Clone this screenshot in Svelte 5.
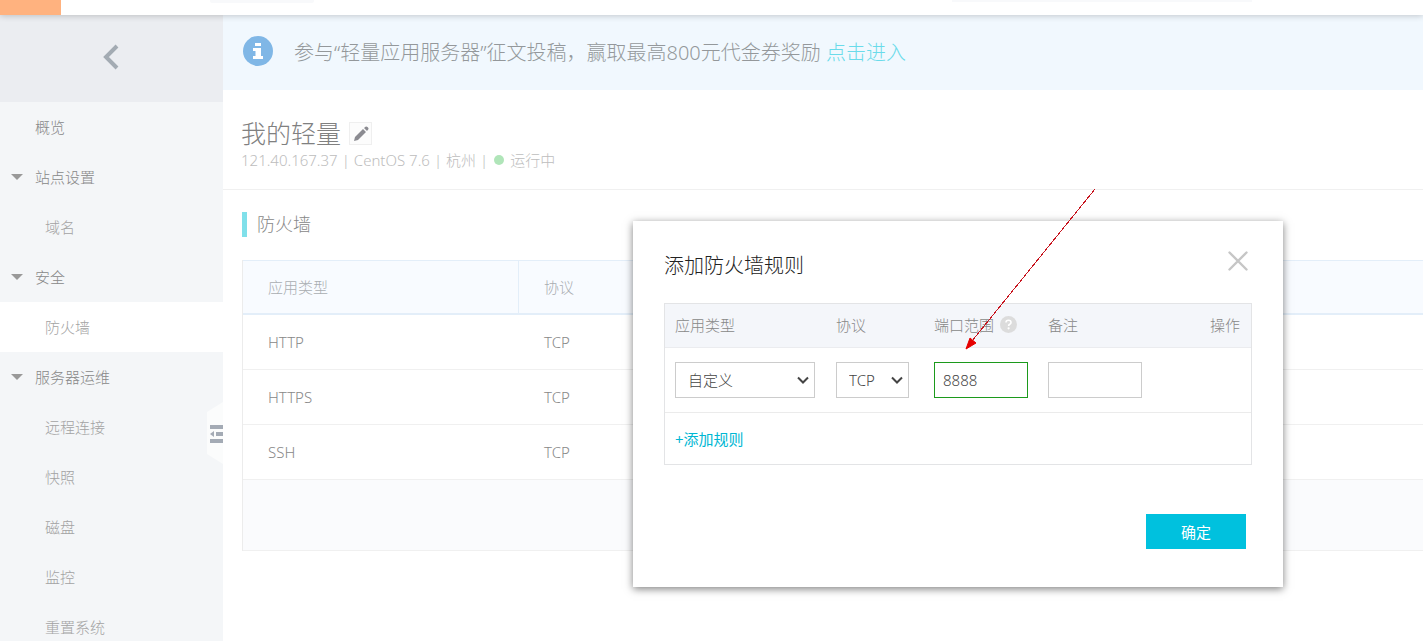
<script>
  const menu = [
    { label: '概览', type: 'top' },
    { label: '站点设置', type: 'group' },
    { label: '域名', type: 'sub' },
    { label: '安全', type: 'group' },
    { label: '防火墙', type: 'sub', active: true },
    { label: '服务器运维', type: 'group' },
    { label: '远程连接', type: 'sub' },
    { label: '快照', type: 'sub' },
    { label: '磁盘', type: 'sub' },
    { label: '监控', type: 'sub' },
    { label: '重置系统', type: 'sub' },
  ];

  const rules = [
    { app: 'HTTP', protocol: 'TCP' },
    { app: 'HTTPS', protocol: 'TCP' },
    { app: 'SSH', protocol: 'TCP' },
  ];

  let app = $state('自定义');
  let protocol = $state('TCP');
  let port = $state('8888');
  let remark = $state('');
  let open = $state(true);
</script>

<div class="page">
  <header class="topbar">
    <div class="brand"></div>
    <div class="region"></div>
    <div class="links"></div>
  </header>

  <div class="body">
    <aside class="sidebar">
      <button class="back" aria-label="返回">
        <svg width="18" height="26" viewBox="0 0 18 26">
          <path d="M15 2 L4 13 L15 24" fill="none" stroke="#a3abb3" stroke-width="4" />
        </svg>
      </button>
      <nav>
        {#each menu as item}
          <a href="#menu" class="item {item.type}" class:active={item.active}>
            {#if item.type === 'group'}<span class="caret"></span>{/if}
            {item.label}
          </a>
        {/each}
      </nav>
      <button class="fold" aria-label="收起">
        <svg width="16" height="62" viewBox="0 0 16 62">
          <path d="M16 0 L0 10 V52 L16 62 Z" fill="#fbfcfc" />
          <path d="M3 23 H16 V27 H3 Z M9 30 H16 V34 H9 Z M3 37 H16 V41 H3 Z" fill="#a4abb5" />
          <path d="M7 29 V35 L3 32 Z" fill="#a4abb5" />
        </svg>
      </button>
    </aside>

    <main>
      <div class="banner">
        <svg width="30" height="30" viewBox="0 0 30 30">
          <circle cx="15" cy="15" r="15" fill="#80b7e6" />
          <path d="M12 7 H18 V10 H12 Z M10 12 H18 V20 H20 V23 H10 V20 H12.500 V15 H10 Z" fill="#fff" />
        </svg>
        <p>参与“轻量应用服务器”征文投稿，赢取最高800元代金券奖励 <a href="#activity">点击进入</a></p>
      </div>

      <section class="server">
        <div class="name">
          <h1>我的轻量</h1>
          <button class="edit" aria-label="编辑">
            <svg width="16" height="16" viewBox="0 0 16 16">
              <path d="M1 15 L2 11 L10 3 L13 6 L5 14 Z M11 2 L12.500 0.700 Q13.500 0 14.500 1 L15.200 1.700 Q16 2.600 15.200 3.500 L14 5 Z" fill="#8b8b91" />
            </svg>
          </button>
        </div>
        <div class="meta">
          <span>121.40.167.37</span><i>|</i><span>CentOS 7.6</span><i>|</i><span>杭州</span><i>|</i>
          <span class="dot"></span><span>运行中</span>
        </div>
      </section>

      <section class="firewall">
        <h2>防火墙</h2>
        <table class="rules">
          <thead>
            <tr><th class="app">应用类型</th><th>协议</th></tr>
          </thead>
          <tbody>
            {#each rules as rule}
              <tr><td>{rule.app}</td><td>{rule.protocol}</td></tr>
            {/each}
          </tbody>
          <tfoot>
            <tr><td colspan="2"></td></tr>
          </tfoot>
        </table>
      </section>
    </main>
  </div>

  {#if open}
    <div class="modal" role="dialog" aria-labelledby="modal-title">
      <div class="modal-head">
        <h3 id="modal-title">添加防火墙规则</h3>
        <button class="close" aria-label="关闭" onclick={() => (open = false)}>
          <svg width="20" height="20" viewBox="0 0 20 20">
            <path d="M1.500 1.500 L18.500 18.500 M18.500 1.500 L1.500 18.500" stroke="#c6c6c6" stroke-width="2.400" stroke-linecap="round" />
          </svg>
        </button>
      </div>

      <table class="form">
        <thead>
          <tr>
            <th class="c-app">应用类型</th>
            <th class="c-protocol">协议</th>
            <th class="c-port">
              <span class="port-label">
                端口范围
                <svg width="17" height="17" viewBox="0 0 17 17">
                  <circle cx="8.500" cy="8.500" r="8.500" fill="#dcdcdc" />
                  <path d="M6 6.500 Q6 4.300 8.500 4.300 Q11 4.300 11 6.400 Q11 7.600 9.700 8.300 Q8.600 8.900 8.600 10" fill="none" stroke="#fff" stroke-width="1.600" />
                  <circle cx="8.600" cy="12.300" r="1.100" fill="#fff" />
                </svg>
              </span>
            </th>
            <th class="c-remark">备注</th>
            <th class="c-action">操作</th>
          </tr>
        </thead>
        <tbody>
          <tr class="fields">
            <td>
              <select class="app-select" aria-label="应用类型" bind:value={app}>
                <option>自定义</option>
              </select>
            </td>
            <td>
              <select class="protocol-select" aria-label="协议" bind:value={protocol}>
                <option>TCP</option>
                <option>UDP</option>
              </select>
            </td>
            <td><input class="valid" type="text" aria-label="端口范围" bind:value={port} /></td>
            <td><input type="text" aria-label="备注" bind:value={remark} /></td>
            <td></td>
          </tr>
          <tr class="add">
            <td colspan="5"><button>+添加规则</button></td>
          </tr>
        </tbody>
      </table>

      <div class="modal-foot">
        <button class="confirm">确定</button>
      </div>

      <svg class="pointer" width="134" height="164" viewBox="0 0 134 164">
        <path d="M131 1 L8 153" stroke="#c8141e" stroke-width="1" shape-rendering="crispEdges" />
        <path d="M2 161 L6 150 L12 155 Z" fill="#e60000" stroke="#e60000" />
      </svg>
    </div>
  {/if}
</div>

<style>
  :global(body) {
    margin: 0;
    background: #fff;
  }

  .page {
    position: relative;
    display: flex;
    flex-direction: column;
    height: 100vh;
    overflow: hidden;
    font-family: 'Noto Sans', 'Noto Sans CJK SC', sans-serif;
    font-size: 15px;
    font-weight: 300;
    line-height: 20px;
    color: #888;
  }

  button,
  input,
  select {
    font: inherit;
    box-sizing: border-box;
  }

  button {
    padding: 0;
    border: 0;
    background: none;
    cursor: pointer;
  }

  a {
    text-decoration: none;
  }

  svg {
    display: block;
    flex: none;
  }

  h1,
  h2,
  h3,
  p {
    margin: 0;
    font-weight: inherit;
  }

  table {
    border-collapse: separate;
    border-spacing: 0;
    table-layout: fixed;
    width: 100%;
  }

  th,
  td {
    box-sizing: border-box;
    padding: 0;
    font-weight: inherit;
    text-align: left;
  }

  /* top bar */
  .topbar {
    display: flex;
    align-items: flex-start;
    flex: none;
    height: 15px;
    background: #fff;
    box-shadow: 0 1px 6px rgba(0, 0, 0, 0.2);
    z-index: 1;
  }

  .brand {
    width: 61px;
    height: 15px;
    background: #ffb27f;
  }

  .region {
    width: 104px;
    height: 3px;
    margin-left: 149px;
    border-radius: 0 0 2px 2px;
    background: #f8f9fb;
  }

  .links {
    width: 300px;
    height: 2px;
    margin-left: auto;
    margin-right: 171px;
    background: #f8f9fb;
  }

  .body {
    display: flex;
    flex: 1;
    min-height: 0;
  }

  /* sidebar */
  .sidebar {
    position: relative;
    flex: none;
    width: 223px;
    background: #f4f6f8;
  }

  .back {
    display: flex;
    align-items: center;
    justify-content: center;
    width: 100%;
    height: 87px;
    padding: 0 2px 3px 0;
    background: #ebedf1;
  }

  .item {
    display: flex;
    align-items: center;
    height: 50px;
    padding-left: 35px;
    color: #888;
  }

  .item.group {
    gap: 12px;
    padding-left: 11px;
  }

  .item.sub {
    padding-left: 45px;
    color: #a3a3a3;
  }

  .item.active {
    background: #fff;
  }

  .caret {
    border: 6px solid transparent;
    border-top-color: #999;
    border-bottom: 0;
  }

  .fold {
    position: absolute;
    top: 387px;
    right: 0;
  }

  main {
    flex: 1;
    min-width: 0;
  }

  /* activity banner */
  .banner {
    display: flex;
    align-items: center;
    gap: 21px;
    height: 75px;
    padding-left: 20px;
    background: #f1f8fe;
    font-size: 20px;
    line-height: 30px;
    color: #94989b;
  }

  .banner svg {
    margin-bottom: 4px;
  }

  .banner a {
    color: #6adbea;
  }

  /* server summary */
  .server {
    box-sizing: border-box;
    height: 100px;
    padding: 27px 18px 0;
    border-bottom: 1px solid #f0f0f0;
  }

  .name {
    display: flex;
    align-items: center;
    gap: 8px;
  }

  h1 {
    font-size: 25px;
    line-height: 33px;
    color: #808080;
  }

  .edit {
    display: flex;
    align-items: center;
    justify-content: center;
    width: 23px;
    height: 23px;
    border: 1px solid #efefef;
    background: #fcfcfc;
  }

  .meta {
    display: flex;
    align-items: center;
    color: #bdbdbd;
  }

  .meta i {
    margin: 0 4px;
    font-style: normal;
  }

  .dot {
    width: 10px;
    height: 10px;
    margin: 0 6px 0 2px;
    border-radius: 50%;
    background: #b0e5b9;
  }

  /* firewall rules */
  .firewall {
    padding: 22px 0 0 19px;
  }

  h2 {
    margin-bottom: 23px;
    padding-left: 10px;
    border-left: 5px solid #80e0ea;
    font-size: 18px;
    line-height: 25px;
    color: #888;
  }

  .rules {
    border-left: 1px solid #ececec;
  }

  .rules th {
    height: 55px;
    padding-left: 25px;
    border-top: 1px solid #e3eef9;
    border-bottom: 2px solid #e3eef9;
    background: #f8fbff;
    color: #a9adb1;
  }

  .rules .app {
    width: 276px;
    border-right: 1px solid #e3eef9;
  }

  .rules td {
    height: 55px;
    padding-left: 25px;
    border-bottom: 1px solid #f0f0f0;
  }

  .rules tfoot td {
    height: 71px;
    background: #fafbfd;
  }

  /* add rule dialog */
  .modal {
    position: absolute;
    top: 221px;
    right: 140px;
    z-index: 2;
    box-sizing: border-box;
    width: 650px;
    padding: 30px 31px 38px;
    background: #fff;
    box-shadow: 0 2px 8px rgba(0, 0, 0, 0.5);
    color: #444;
  }

  .modal-head {
    display: flex;
    justify-content: space-between;
    margin-bottom: 22px;
    padding-right: 4px;
  }

  h3 {
    font-size: 20px;
    line-height: 30px;
    color: #222;
  }

  .close {
    height: 20px;
  }

  .form {
    border: 1px solid #e3e4e6;
  }

  .form th {
    height: 44px;
    padding: 0 0 2px 10px;
    border-bottom: 1px solid #ebecef;
    background: #f4f6fa;
    color: #888;
  }

  .c-app {
    width: 161px;
  }

  .c-protocol {
    width: 98px;
  }

  .c-port {
    width: 114px;
  }

  .c-remark {
    width: 114px;
  }

  .form .c-action {
    padding-right: 11px;
    text-align: right;
  }

  .port-label {
    display: flex;
    align-items: center;
    gap: 6px;
  }

  .fields td {
    height: 65px;
    padding-left: 10px;
    border-bottom: 1px solid #ebebeb;
  }

  select,
  input {
    display: block;
    height: 36px;
    border: 1px solid #ccc;
    border-radius: 0;
    background: #fff;
    color: #444;
  }

  select {
    appearance: none;
    padding: 0 20px 0 12px;
    background: #fff url("data:image/svg+xml,%3Csvg xmlns='http://www.w3.org/2000/svg' width='12' height='8'%3E%3Cpath d='M1 1.500 L6 6.500 L11 1.500' fill='none' stroke='%23444' stroke-width='2'/%3E%3C/svg%3E") no-repeat right 5px center;
  }

  .app-select {
    width: 140px;
  }

  .protocol-select {
    width: 73px;
  }

  input {
    width: 94px;
    padding: 0 8px;
  }

  input.valid {
    border-color: #1c9a1c;
  }

  .add td {
    height: 51px;
    padding-left: 10px;
  }

  .add button {
    color: #00b7d3;
    font-weight: 400;
  }

  .modal-foot {
    display: flex;
    justify-content: flex-end;
    margin-top: 49px;
    padding-right: 6px;
  }

  .confirm {
    width: 100px;
    height: 35px;
    background: #00c1de;
    color: #fff;
    font-weight: 400;
  }

  /* arrow pointing at the port field */
  .pointer {
    position: absolute;
    top: -33px;
    left: 331px;
    pointer-events: none;
  }
</style>
